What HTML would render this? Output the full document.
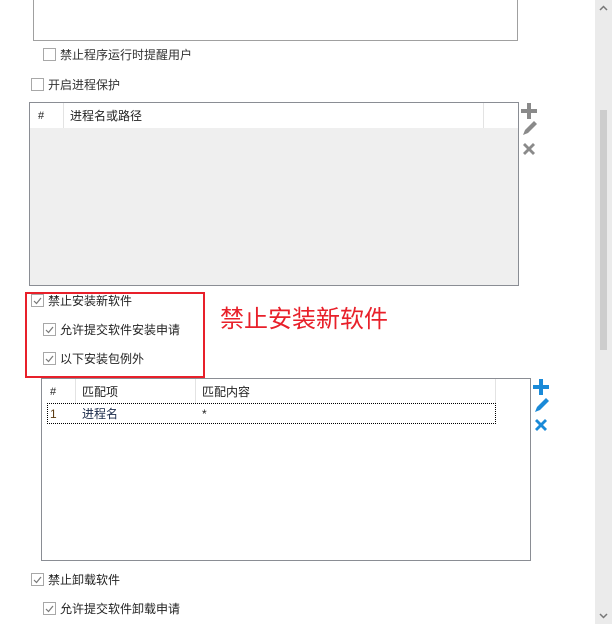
<!DOCTYPE html>
<html><head><meta charset="utf-8"><style>
body{margin:0;width:612px;height:624px;background:#fff;position:relative;overflow:hidden;font-family:"Liberation Sans","Microsoft YaHei","Noto Sans CJK SC",sans-serif;font-size:12px;color:#222}
.a{position:absolute}
.cb{position:absolute;width:11px;height:11px;border:1px solid #a8a8a8;background:#fff}
.cb svg{position:absolute;left:0;top:0}
.t{position:absolute;line-height:14px;white-space:nowrap}
</style></head><body>
<div class="a" style="left:33px;top:-2px;width:483px;height:41px;border:1px solid #a0a0a0"></div>
<div class="cb" style="left:43px;top:48px"></div><div class="t" style="left:60px;top:48px;color:#333">禁止程序运行时提醒用户</div>
<div class="cb" style="left:31px;top:78px"></div><div class="t" style="left:48px;top:78px;color:#333">开启进程保护</div>

<div class="a" style="left:29px;top:102px;width:488px;height:182px;border:1px solid #8a8d94;background:#efefef"></div>
<div class="a" style="left:30px;top:103px;width:488px;height:25px;background:#fff"></div>
<div class="a" style="left:63px;top:103px;width:1px;height:25px;background:#e3e3e3"></div>
<div class="a" style="left:483px;top:103px;width:1px;height:25px;background:#e3e3e3"></div>
<div class="t" style="left:38px;top:109px;font-size:11px">#</div>
<div class="t" style="left:70px;top:109px">进程名或路径</div>
<svg class="a" style="left:520px;top:102px" width="18" height="56">
<path d="M7 1h4v6h6v4h-6v6h-4v-6h-6v-4h6z" fill="#8a8a8a"/>
<path d="M3 33l2-5 9-9 3 3-9 9z" fill="#8a8a8a"/>
<path d="M3 43l2-2 4 4 4-4 2 2-4 4 4 4-2 2-4-4-4 4-2-2 4-4z" fill="#8a8a8a"/>
</svg>

<div class="a" style="left:25px;top:292px;width:176px;height:82px;border:2px solid #e8202a"></div>
<div class="cb" style="left:31px;top:294px"><svg width="11" height="11"><path d="M2 6l2.5 2.5L9 3" stroke="#777" stroke-width="1.2" fill="none"/></svg></div><div class="t" style="left:48px;top:294px">禁止安装新软件</div>
<div class="cb" style="left:43px;top:323px"><svg width="11" height="11"><path d="M2 6l2.5 2.5L9 3" stroke="#777" stroke-width="1.2" fill="none"/></svg></div><div class="t" style="left:60px;top:323px">允许提交软件安装申请</div>
<div class="cb" style="left:43px;top:352px"><svg width="11" height="11"><path d="M2 6l2.5 2.5L9 3" stroke="#777" stroke-width="1.2" fill="none"/></svg></div><div class="t" style="left:60px;top:352px">以下安装包例外</div>
<div class="t" style="left:220px;top:305px;font-size:24px;line-height:30px;color:#e8202a">禁止安装新软件</div>

<div class="a" style="left:41px;top:378px;width:488px;height:181px;border:1px solid #8a8d94;background:#fff"></div>
<div class="a" style="left:75px;top:379px;width:1px;height:24px;background:#e3e3e3"></div>
<div class="a" style="left:195px;top:379px;width:1px;height:24px;background:#e3e3e3"></div>
<div class="a" style="left:495px;top:379px;width:1px;height:24px;background:#e3e3e3"></div>
<div class="t" style="left:50px;top:385px;font-size:11px">#</div>
<div class="t" style="left:82px;top:385px">匹配项</div>
<div class="t" style="left:202px;top:385px">匹配内容</div>
<div class="a" style="left:47px;top:403px;width:447px;height:19px;border:1px dotted #000"></div>
<div class="t" style="left:50px;top:407px;color:#5a3a10">1</div>
<div class="t" style="left:82px;top:407px;color:#1a2a4a">进程名</div>
<div class="t" style="left:202px;top:407px">*</div>
<svg class="a" style="left:532px;top:377px" width="18" height="58">
<path d="M7 2h4v6h6v4h-6v6h-4v-6h-6v-4h6z" fill="#1a8ad8"/>
<path d="M3 35l2-5 9-9 3 3-9 9z" fill="#1a8ad8"/>
<path d="M3 44l2-2 4 4 4-4 2 2-4 4 4 4-2 2-4-4-4 4-2-2 4-4z" fill="#1a8ad8"/>
</svg>

<div class="cb" style="left:31px;top:573px"><svg width="11" height="11"><path d="M2 6l2.5 2.5L9 3" stroke="#777" stroke-width="1.2" fill="none"/></svg></div><div class="t" style="left:48px;top:573px">禁止卸载软件</div>
<div class="cb" style="left:43px;top:602px"><svg width="11" height="11"><path d="M2 6l2.5 2.5L9 3" stroke="#777" stroke-width="1.2" fill="none"/></svg></div><div class="t" style="left:60px;top:602px">允许提交软件卸载申请</div>

<div class="a" style="left:595px;top:0;width:17px;height:624px;background:#ebebeb"></div>
<div class="a" style="left:600px;top:110px;width:7px;height:240px;background:#cdcdcd"></div>
<svg class="a" style="left:595px;top:0" width="17" height="624">
<path d="M5 10l3.5-3.5L12 10" stroke="#777" stroke-width="1.5" fill="none"/>
<path d="M5 614l3.5 3.5L12 614" stroke="#777" stroke-width="1.5" fill="none"/>
</svg>
</body></html>
